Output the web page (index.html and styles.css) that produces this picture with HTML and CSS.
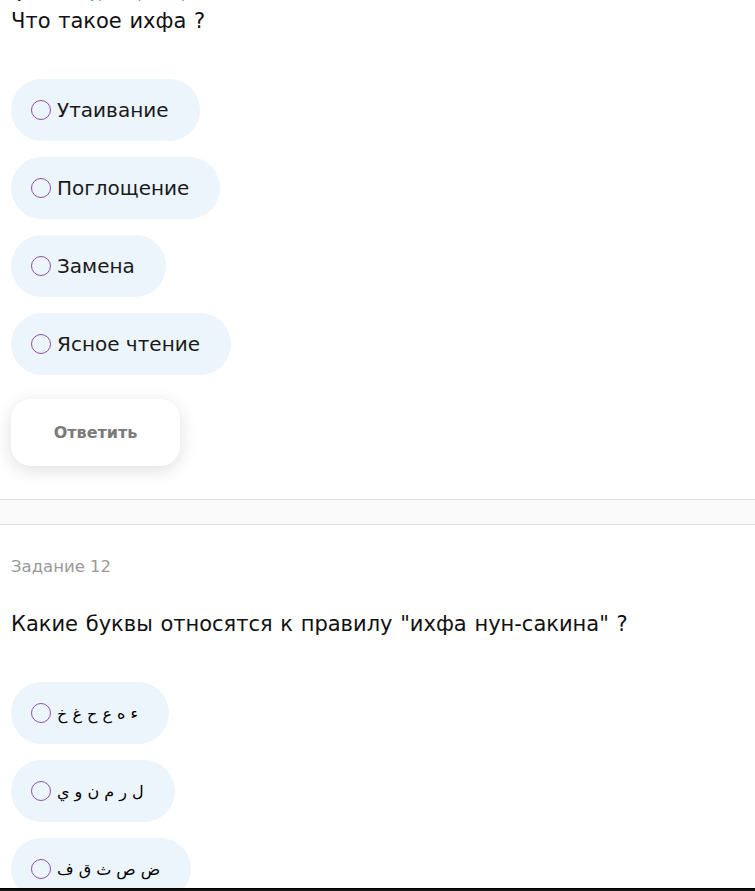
FILE: index.html
```html
<!DOCTYPE html>
<html lang="ru">
<head>
  <meta charset="UTF-8">
  <meta name="viewport" content="width=device-width, initial-scale=1.0">
  <title>Тест: нун-сакин и танвин</title>
  <link rel="stylesheet" href="styles.css">
</head>
<body>
  <div class="page">
    <div class="crumb">
      <span class="crumb-dark">у</span>
      <a href="#" class="crumb-link">урок пр</a>
      <a href="#" class="crumb-link crumb-link-last">раздел д</a>
    </div>

    <section class="task">
      <p class="question">Что такое ихфа ?</p>
      <div class="options">
        <label class="option"><input type="radio" name="task11"><span>Утаивание</span></label>
        <label class="option"><input type="radio" name="task11"><span>Поглощение</span></label>
        <label class="option"><input type="radio" name="task11"><span>Замена</span></label>
        <label class="option"><input type="radio" name="task11"><span>Ясное чтение</span></label>
      </div>
      <button class="answer-btn">Ответить</button>
    </section>

    <div class="divider"></div>

    <section class="task">
      <div class="task-num">Задание 12</div>
      <p class="question">Какие буквы относятся к правилу "ихфа нун-сакина" ?</p>
      <div class="options">
        <label class="option"><input type="radio" name="task12"><span class="arabic">ء ه ع ح غ خ</span></label>
        <label class="option"><input type="radio" name="task12"><span class="arabic">ل ر م ن و ي</span></label>
        <label class="option"><input type="radio" name="task12"><span class="arabic">ض ص ث ق ف</span></label>
      </div>
    </section>
  </div>

  <nav class="tabbar">
    <a href="#" class="tab tab-1">Материалы</a>
    <a href="#" class="tab tab-2">Тест</a>
    <a href="#" class="tab tab-3">Преподаватели</a>
    <a href="#" class="tab tab-4">Расписание</a>
    <a href="#" class="tab tab-5">Упражнения</a>
    <a href="#" class="tab tab-6">Произношение</a>
  </nav>
</body>
</html>
```

FILE: styles.css
```css
body {
  font-family: "DejaVu Sans", sans-serif;
  background-color: #fff;
  color: #111;
  margin: 0;
  padding: 0;
}
.page {
  padding: 0 11px;
}
.crumb {
  margin-top: -15px;
  height: 16px;
  font-size: 14px;
  line-height: 16px;
  white-space: nowrap;
}
.crumb-dark {
  margin-left: 6px;
}
.crumb-link {
  color: #4a9ae6;
  text-decoration: none;
  margin-left: 60px;
}
.crumb-link-last {
  margin-left: 30px;
}
.task {
  padding-bottom: 33px;
}
.question {
  margin: 8px 0 46px;
  font-size: 21px;
  line-height: 24px;
  word-spacing: 1px;
  color: #111;
}
.task-num {
  margin-top: 32px;
  font-size: 16.5px;
  line-height: 20px;
  color: #9a9a9a;
}
.task-num + .question {
  margin-top: 35px;
}
.options {
  display: flex;
  flex-direction: column;
  align-items: flex-start;
  gap: 16px;
}
.option {
  display: inline-flex;
  align-items: center;
  height: 62px;
  padding: 0 31px 0 20px;
  border-radius: 31px;
  background: #ecf4fc;
  font-size: 20px;
  color: #1a1a1a;
  cursor: pointer;
}
.option input {
  appearance: none;
  -webkit-appearance: none;
  width: 20px;
  height: 20px;
  margin: 0 6px 0 0;
  border: 1.5px solid #8c52a8;
  border-radius: 50%;
  background: transparent;
  cursor: pointer;
}
.option input:checked {
  background: radial-gradient(circle, #8c52a8 45%, transparent 50%);
}
.arabic {
  font-size: 16px;
  color: #000;
}
.answer-btn {
  margin-top: 24px;
  width: 169px;
  height: 67px;
  border: none;
  border-radius: 20px;
  background: #fff;
  box-shadow: 0 4px 18px rgba(0, 0, 0, 0.13);
  font-family: inherit;
  font-size: 16px;
  font-weight: bold;
  color: #7a7a7a;
  cursor: pointer;
}
.divider {
  height: 24px;
  margin: 0 -11px;
  background: #fafafa;
  border-top: 1px solid #e0e0e0;
  border-bottom: 1px solid #e0e0e0;
}
.tabbar {
  position: fixed;
  top: 888px;
  left: 0;
  right: 0;
  height: 60px;
  display: flex;
  background: #151515;
  border-top: 1px solid #000;
  font-size: 13px;
  line-height: 13px;
}
.tab {
  color: #cfcfcf;
  text-decoration: none;
  white-space: nowrap;
}
.tab-1 { margin-left: 30px; }
.tab-2 { margin-left: 93px; }
.tab-3 { margin-left: 57px; }
.tab-4 { margin-left: 45px; }
.tab-5 { margin-left: 30px; }
.tab-6 { margin-left: 25px; }
```
